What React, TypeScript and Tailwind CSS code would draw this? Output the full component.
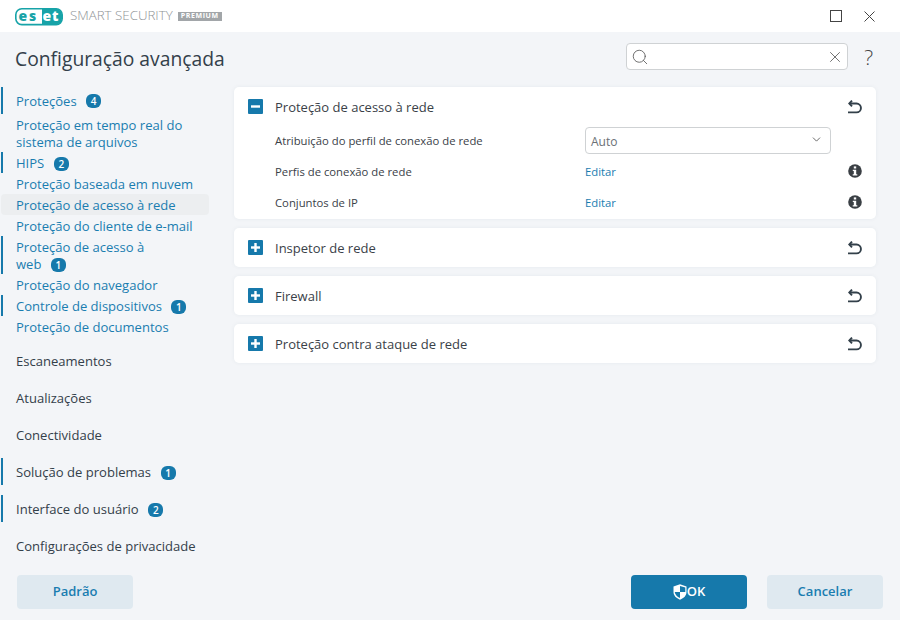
import { ChevronDown, Search, X } from 'lucide-react'

const FONT = "font-['Open_Sans','Noto_Sans',sans-serif]"

function Badge({ n }: { n: number }) {
  return (
    <span className="ml-[9.5px] inline-flex h-[14px] w-[15px] shrink-0 items-center justify-center rounded-[6px] bg-[#1679ab] align-[0px] text-[10px] font-semibold leading-none text-white">
      {n}
    </span>
  )
}

interface NavItemProps {
  label: string
  badge?: number
  bar?: boolean
  tall?: boolean
  active?: boolean
  dark?: boolean
}

function NavItem({ label, badge, bar, tall, active, dark }: NavItemProps) {
  return (
    <div
      className={`relative flex items-center rounded-[4px] pl-[15px] text-[13.05px] font-medium leading-[17px] ${dark ? 'h-[27px] text-[#33404a]' : 'text-[#1a7db0]'} ${tall ? 'h-[38px]' : dark ? '' : 'h-[21px]'} ${active ? 'bg-[#eceef0]' : ''}`}
    >
      {bar && <span className="absolute bottom-0 left-0 top-0 w-[2px] bg-[#1679ab]" />}
      <span className="pt-[2px]">
        {label}
        {badge !== undefined && <Badge n={badge} />}
      </span>
    </div>
  )
}

function Sidebar() {
  return (
    <nav className="ml-px w-[208px] shrink-0">
      <div className="relative flex h-[27px] items-center pl-[15px] text-[13.05px] font-medium text-[#1a7db0]">
        <span className="absolute bottom-0 left-0 top-0 w-[2px] bg-[#1679ab]" />
        <span className="pt-[2px]">Proteções</span>
        <Badge n={4} />
      </div>
      <NavItem tall label="Proteção em tempo real do sistema de arquivos" />
      <NavItem bar badge={2} label="HIPS" />
      <NavItem label="Proteção baseada em nuvem" />
      <NavItem active label="Proteção de acesso à rede" />
      <NavItem label="Proteção do cliente de e-mail" />
      <div className="relative flex h-[38px] flex-col justify-center pl-[15px] pt-[2px] text-[13.05px] font-medium leading-[17px] text-[#1a7db0]">
        <span className="absolute bottom-0 left-0 top-0 w-[2px] bg-[#1679ab]" />
        <span>Proteção de acesso à</span>
        <span className="flex items-center">
          web
          <Badge n={1} />
        </span>
      </div>
      <NavItem label="Proteção do navegador" />
      <NavItem bar badge={1} label="Controle de dispositivos" />
      <NavItem label="Proteção de documentos" />
      <div className="mt-[10px] flex flex-col gap-[10px]">
        <NavItem dark label="Escaneamentos" />
        <NavItem dark label="Atualizações" />
        <NavItem dark label="Conectividade" />
        <NavItem dark bar badge={1} label="Solução de problemas" />
        <NavItem dark bar badge={2} label="Interface do usuário" />
        <NavItem dark label="Configurações de privacidade" />
      </div>
    </nav>
  )
}

function InfoIcon() {
  return (
    <svg viewBox="0 0 14 14" className="mb-[2px] h-[14px] w-[14px]">
      <circle cx="7" cy="7" r="6.8" fill="#3a3f44" />
      <rect x="5.8" y="2.4" width="2.4" height="2.1" fill="#fff" />
      <path d="M4.800 5.700h3.400v4.500h1.100v1.400H4.700v-1.400h1.100V7.100h-1z" fill="#fff" />
    </svg>
  )
}

function UndoIcon() {
  return (
    <svg viewBox="0 0 14 14" fill="none" stroke="#33404a" strokeWidth="1.900" className="h-[14px] w-[14px]">
      <path d="M4 .600 1.300 3.500 4 6.300" />
      <path d="M1.500 3.500H8.500a4.200 4.200 0 0 1 0 8.900H0" />
    </svg>
  )
}

function ToggleBox({ open }: { open?: boolean }) {
  return (
    <svg viewBox="0 0 15 15" className="h-[15px] w-[15px] shrink-0">
      <rect width="15" height="15" rx="1" fill="#1679ab" />
      <rect x="3" y="6.300" width="9" height="2.400" fill="#fff" />
      {!open && <rect x="6.300" y="3" width="2.400" height="9" fill="#fff" />}
    </svg>
  )
}

function SectionHead({ title, open }: { title: string; open?: boolean }) {
  return (
    <div className="flex h-[39px] items-center pl-[14px] pr-[14px]">
      <ToggleBox open={open} />
      <span className="ml-[12px] flex-1 pt-[2px] text-[13px] font-medium text-[#3a4148]">{title}</span>
      <UndoIcon />
    </div>
  )
}

function Row({ label, children, info }: { label: string; children: React.ReactNode; info?: boolean }) {
  return (
    <div className="flex h-[31px] items-center pl-[41px] pr-[14px] text-[11.3px] text-[#3a4148]">
      <span className="w-[310px] pt-[2px]">{label}</span>
      <div className="flex-1 pt-[2px]">{children}</div>
      {info && <InfoIcon />}
    </div>
  )
}

function Card({ children }: { children: React.ReactNode }) {
  return <section className="rounded-[5px] bg-white shadow-[0_0_4px_rgba(40,60,80,0.06)]">{children}</section>
}

function Main() {
  return (
    <main className="ml-[25px] flex w-[642px] flex-col gap-[9px]">
      <Card>
        <SectionHead open title="Proteção de acesso à rede" />
        <div className="pb-px">
          <div className="flex h-[30px] items-start pl-[41px] pt-px text-[11.3px] text-[#3a4148]">
            <span className="mt-[6px] w-[310px]">Atribuição do perfil de conexão de rede</span>
            <div className="flex h-[27px] w-[246px] items-center justify-between rounded-[4px] border border-[#cfd2d4] bg-white pl-[5px] pr-[7px] text-[12px] text-[#6a7076]">
              <span className="pt-[2px]">Auto</span>
              <ChevronDown size={13} strokeWidth={1.6} className="mb-[2px] text-[#555]" />
            </div>
          </div>
          <Row info label="Perfis de conexão de rede">
            <span className="text-[#1a7db0]">Editar</span>
          </Row>
          <Row info label="Conjuntos de IP">
            <span className="text-[#1a7db0]">Editar</span>
          </Row>
        </div>
      </Card>
      <Card>
        <SectionHead title="Inspetor de rede" />
      </Card>
      <Card>
        <SectionHead title="Firewall" />
      </Card>
      <Card>
        <SectionHead title="Proteção contra ataque de rede" />
      </Card>
    </main>
  )
}

function ShieldIcon() {
  return (
    <svg viewBox="0 0 14 16" className="h-[16px] w-[14px]">
      <path d="M7 .3 13.500 2.600v5.400c0 3.600-2.700 6.200-6.500 7.700C3.200 14.200.5 11.600.5 8V2.600z" fill="#fff" />
      <path d="M7 1.900V8h5.300V3.400zM7 8H1.700c.3 2.600 2.400 4.800 5.300 6.100z" fill="#1679ab" />
    </svg>
  )
}

export default function App() {
  const lightBtn = 'flex h-[34px] w-[116px] items-center justify-center rounded-[4px] bg-[#dfe9f0] text-[13px] font-semibold text-[#1a7db0]'
  return (
    <div className={`flex h-[620px] w-[900px] flex-col overflow-hidden bg-[#f3f5f8] ${FONT}`}>
      <header className="flex h-[32px] items-center bg-white pl-[15px] pr-[25px]">
        <svg viewBox="0 0 49 19" className="h-[19px] w-[49px]">
          <rect x="0.8" y="1.800" width="46.400" height="15.800" rx="6" fill="#fff" stroke="#17a3a8" strokeWidth="1.600" />
          <path d="M27 1.800h14a6 6 0 0 1 6 6v3.800a6 6 0 0 1-6 6H27z" fill="#17a3a8" />
          <text x="3.500" y="14" fontSize="14" fontWeight="800" fill="#17a3a8" fontFamily="Open Sans">e</text>
          <text x="14" y="14" fontSize="14" fontWeight="800" fill="#17a3a8" fontFamily="Open Sans">s</text>
          <text x="27.500" y="14" fontSize="14" fontWeight="800" fill="#fff" fontFamily="Open Sans">e</text>
          <text x="37" y="14" fontSize="14" fontWeight="800" fill="#fff" fontFamily="Open Sans">t</text>
        </svg>
        <span className="ml-[6px] text-[13.300px] font-light text-[#8f9396]">SMART SECURITY</span>
        <span className="ml-[5px] flex h-[9px] items-center bg-[#a2a6a9] px-[3px] text-[7px] font-bold tracking-[0.6px] text-white">PREMIUM</span>
        <div className="ml-auto flex items-center gap-[22px]">
          <svg viewBox="0 0 12 12" fill="none" stroke="#444" className="h-[12px] w-[12px]">
            <rect x="0.5" y="0.5" width="11" height="11" />
          </svg>
          <svg viewBox="0 0 11 11" fill="none" stroke="#444" className="h-[11px] w-[11px]">
            <path d="M.5.5l10 10M10.500.5l-10 10" />
          </svg>
        </div>
      </header>

      <div className="flex h-[55px] items-center pl-[15px]">
        <h1 className="flex-1 text-[19.300px] font-medium text-[#33404a]">Configuração avançada</h1>
        <div className="mb-[6px] flex h-[27px] w-[222px] items-center justify-between rounded-[4px] border border-[#cfd2d4] bg-white pl-[4px] pr-[3px]">
          <Search size={18} strokeWidth={1.1} className="text-[#555]" />
          <X size={18} strokeWidth={1.1} className="text-[#555]" />
        </div>
        <span className="mb-[4px] ml-[16px] mr-[27px] text-[21px] font-light leading-none text-[#444]">?</span>
      </div>

      <div className="flex flex-1">
        <Sidebar />
        <Main />
      </div>

      <footer className="flex h-[45px] items-start px-[17px] pb-[11px]">
        <button className={lightBtn}>Padrão</button>
        <button className="ml-auto flex h-[34px] w-[116px] items-center justify-center rounded-[4px] bg-[#1679ab] text-[13px] font-semibold text-white">
          <ShieldIcon />
          OK
        </button>
        <button className={`ml-[20px] ${lightBtn}`}>Cancelar</button>
      </footer>
    </div>
  )
}
